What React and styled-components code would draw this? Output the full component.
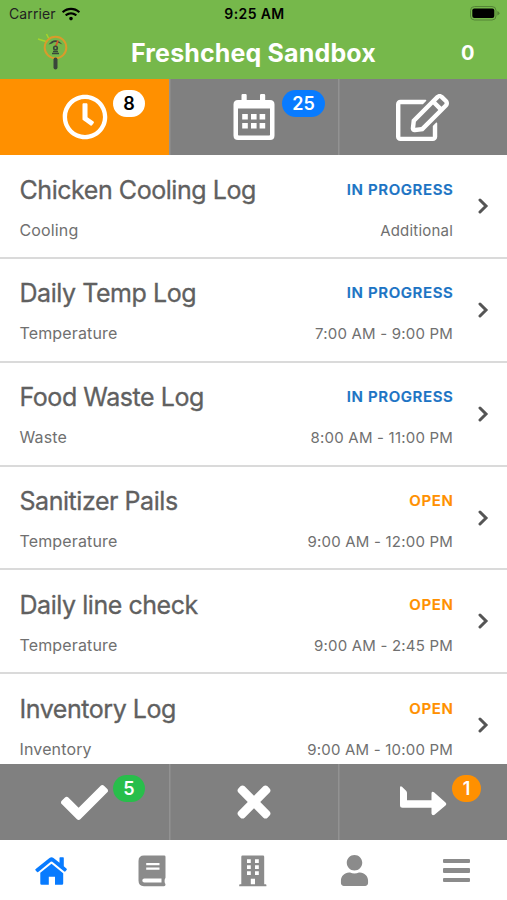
import React from 'react'
import styled, { createGlobalStyle } from 'styled-components';
import { FaRegClock, FaRegEdit, FaCheck, FaTimes, FaUser, FaWifi } from 'react-icons/fa';

const logs = [
    { name: "Chicken Cooling Log", type: "Cooling", status: "IN PROGRESS", time: "Additional" },
    { name: "Daily Temp Log", type: "Temperature", status: "IN PROGRESS", time: "7:00 AM - 9:00 PM" },
    { name: "Food Waste Log", type: "Waste", status: "IN PROGRESS", time: "8:00 AM - 11:00 PM" },
    { name: "Sanitizer Pails", type: "Temperature", status: "OPEN", time: "9:00 AM - 12:00 PM" },
    { name: "Daily line check", type: "Temperature", status: "OPEN", time: "9:00 AM - 2:45 PM" },
    { name: "Inventory Log", type: "Inventory", status: "OPEN", time: "9:00 AM - 10:00 PM" },
];

function Logo() {
    return (
        <svg width="32" height="40" viewBox="0 0 32 40" fill="none">
            <path d="M1 6 L9 8.5 M9.5 1 L12 6" stroke="#a4d52c" strokeWidth="1.5" />
            <circle cx="18.5" cy="14.5" r="10.8" stroke="#d99b2b" strokeWidth="2" />
            <path d="M11.5 11.5 Q18 3 25.5 11.5 L22 10 Q18 8 15 10.5 Z" fill="#39473a" />
            <path d="M18.5 14 L21 7.5" stroke="#d25b2d" strokeWidth="1.8" />
            <circle cx="18.5" cy="15" r="1.8" stroke="#39473a" strokeWidth="1.6" />
            <path d="M16 18.5 H21 M15 20.5 H22" stroke="#39473a" strokeWidth="1.5" />
            <path d="M18.5 26.5 V34.5" stroke="#39473a" strokeWidth="4" strokeLinecap="round" />
        </svg>
    )
}

function BatteryIcon() {
    return (
        <svg width="30" height="15" viewBox="0 0 30 15">
            <rect x="0.5" y="0.5" width="25.5" height="13.5" rx="4" fill="none" stroke="#548436" />
            <rect x="2.3" y="2.5" width="22" height="9.5" rx="2" fill="#000" />
            <path d="M27.3 5 Q29.5 6 29.5 7.2 Q29.5 8.5 27.3 9.5 Z" fill="#548436" />
        </svg>
    )
}

function CalendarIcon() {
    return (
        <svg width="42" height="46" viewBox="0 0 42 46" fill="#fff">
            <path fillRule="evenodd" d="M8.5 1.2 Q8.5 0 9.7 0 H12.5 Q13.7 0 13.7 1.2 V6 H27 V1.2 Q27 0 28.2 0 H31 Q32.2 0 32.2 1.2 V6 H37 Q41.5 6 41.5 10.5 V41.5 Q41.5 46 37 46 H5 Q0.5 46 0.5 41.5 V10.5 Q0.5 6 5 6 H8.5 Z M5 14.5 V40.7 Q5 41.5 5.8 41.5 H36.2 Q37 41.5 37 40.7 V14.5 Z" />
            <path d="M9.2 20h5.6v5.6h-5.6zM18 20h5.6v5.6h-5.6zM26.6 20h5.6v5.6h-5.6zM9.2 29h5.6v5.6h-5.6zM18 29h5.6v5.6h-5.6zM26.6 29h5.6v5.6h-5.6z" />
        </svg>
    )
}

function ForwardIcon() {
    return (
        <svg width="48" height="32" viewBox="0 0 48 32" fill="#fff">
            <path d="M1 1.5 Q1.3 -0.5 3 0.8 L7.3 5 Q8 6 8 7 V14.3 H32.5 V7 Q33 5 35 6.3 L46.5 16.5 Q48 18 46.5 19.5 L35.5 28.8 Q33 30 32.5 27.5 V21.7 H3.5 Q1 21.7 1 19.2 Z" />
        </svg>
    )
}

function HomeIcon() {
    return (
        <svg width="32" height="28" viewBox="0 0 32 28" fill="#087bff">
            <path d="M14.5 1 Q16.5 -0.6 18.5 1 L24.5 5.7 V1 Q24.5 0.3 25.2 0.3 H28.1 Q28.8 0.3 28.8 1 V9.3 L31.4 11.5 Q32.2 12.3 31.6 13 L30.5 14.3 Q29.8 15 29 14.3 L17.3 4.8 Q16.5 4.2 15.7 4.8 L3.2 14.9 Q2.4 15.5 1.8 14.8 L0.5 13.3 Q0 12.6 0.7 12 Z" />
            <path d="M5.3 15.7 L16.5 6.8 L28.2 16.2 V26.5 Q28.2 27.8 26.9 27.8 H20 V19.7 H13.8 V27.8 H6.6 Q5.3 27.8 5.3 26.5 Z" />
        </svg>
    )
}

function BookIcon() {
    return (
        <svg width="28" height="32" viewBox="0 0 28 32">
            <path fill="#8b8b8b" fillRule="evenodd" d="M6 0.5 H26.2 Q27.5 0.5 27.5 1.8 V22.5 Q27.5 23.3 26.8 24 Q26.3 26 26.8 28 Q27.5 28.5 27.5 29.5 Q27.5 31.2 26 31.2 H6 Q0.5 31.2 0.5 25.5 V6 Q0.5 0.5 6 0.5 Z M8.2 8 V10.2 H21.5 V8 Z M8.2 12.5 V14.7 H21.5 V12.5 Z M6.3 23.4 Q4.3 23.4 4.3 25.4 Q4.3 27.4 6.3 27.4 H23.5 V23.4 Z" />
        </svg>
    )
}

function BuildingIcon() {
    return (
        <svg width="28" height="32" viewBox="0 0 28 32">
            <path fill="#8b8b8b" d="M3.5 0.5 H24 Q25.2 0.5 25.2 1.7 V29.3 H26.6 Q27.4 29.3 27.4 30 V31.3 H0.2 V30 Q0.2 29.3 1 29.3 H2.3 V1.7 Q2.3 0.5 3.5 0.5 Z" />
            <path fill="#fff" d="M8 4.2h3.8v3.8h-3.8zM16 4.2h3.8v3.8h-3.8zM8 10.2h3.8v3.8h-3.8zM16 10.2h3.8v3.8h-3.8zM8 16.2h3.8v3.8h-3.8zM16 16.2h3.8v3.8h-3.8zM11.8 23.7h4.2v5.6h-4.2z" />
        </svg>
    )
}

function App() {
    return (
        <Screen>
            <GlobalStyle />
            <Header>
                <StatusBar>
                    <Carrier>Carrier <FaWifi size={18} /></Carrier>
                    <Clock>9:25 AM</Clock>
                    <BatteryIcon />
                </StatusBar>
                <TitleBar>
                    <Logo />
                    <h1>Freshcheq Sandbox</h1>
                    <Count>0</Count>
                </TitleBar>
            </Header>

            <Tabs>
                <Tab $active>
                    <FaRegClock size={46} />
                    <Badge $left={113} $width={32} $bg="#fff" $color="#000">8</Badge>
                </Tab>
                <Tab>
                    <CalendarIcon />
                    <Badge $left={113} $width={43} $bg="#087bff">25</Badge>
                </Tab>
                <Tab>
                    <FaRegEdit size={53} />
                </Tab>
            </Tabs>

            <List>
                {logs.map(log => (
                    <Row key={log.name}>
                        <Info>
                            <h2>{log.name}</h2>
                            <p>{log.type}</p>
                        </Info>
                        <Meta>
                            <Status $open={log.status === "OPEN"}>{log.status}</Status>
                            <p>{log.time}</p>
                        </Meta>
                        <svg width="11" height="16" viewBox="0 0 11 16" fill="none">
                            <path d="M2 2 L8 8 L2 14" stroke="#555" strokeWidth="3" strokeLinecap="round" />
                        </svg>
                    </Row>
                ))}
            </List>

            <Tabs>
                <Tab>
                    <FaCheck size={47} />
                    <Badge $left={113} $width={32} $bg="#28be4b">5</Badge>
                </Tab>
                <Tab>
                    <FaTimes size={48} />
                </Tab>
                <Tab>
                    <ForwardIcon />
                    <Badge $left={114} $width={29} $bg="#ff9000">1</Badge>
                </Tab>
            </Tabs>

            <BottomNav>
                <NavItem><HomeIcon /></NavItem>
                <NavItem><BookIcon /></NavItem>
                <NavItem><BuildingIcon /></NavItem>
                <NavItem><FaUser size={31} /></NavItem>
                <NavItem><MenuLines><i /><i /><i /></MenuLines></NavItem>
            </BottomNav>
        </Screen>
    )
}

export default App

const GlobalStyle = createGlobalStyle`
    * {
        box-sizing: border-box;
    }

    body {
        margin: 0;
        font-family: Inter, "Liberation Sans", sans-serif;
    }

    h1, h2, p {
        margin: 0;
    }

    svg {
        display: block;
        flex: none;
    }
`

const Screen = styled.div`
    width: 507px;
    height: 900px;
    display: flex;
    flex-direction: column;
    overflow: hidden;
    background-color: #fff;
`

const Header = styled.header`
    height: 79px;
    background-color: #76b84b;
`

const StatusBar = styled.div`
    height: 27px;
    padding: 0 7px 0 9px;
    display: grid;
    grid-template-columns: 1fr auto 1fr;
    align-items: center;
    font-size: 14px;

    & > svg {
        justify-self: end;
    }
`

const Carrier = styled.div`
    display: flex;
    align-items: center;
    gap: 6px;
    color: #222;
    letter-spacing: 0.1px;

    svg {
        color: #000;
    }
`

const Clock = styled.div`
    font-weight: 600;
    letter-spacing: 0.4px;
`

const TitleBar = styled.div`
    height: 52px;
    display: grid;
    grid-template-columns: 131px 1fr 131px;
    align-items: center;
    color: #fff;

    svg {
        margin-left: 37px;
    }

    h1 {
        font-size: 25px;
        line-height: 30px;
        margin-top: -1px;
        letter-spacing: 0.15px;
        text-align: center;
        white-space: nowrap;
    }
`

const Count = styled.div`
    padding-left: 85px;
    font-size: 20px;
    font-weight: 700;
`

const Tabs = styled.div`
    height: 76px;
    flex: none;
    display: grid;
    grid-template-columns: repeat(3, 1fr);
`

const Tab = styled.div`
    position: relative;
    display: flex;
    align-items: center;
    justify-content: center;
    color: #fff;
    background-color: ${props => props.$active ? '#ff9000' : '#808080'};

    & + & {
        box-shadow: inset 1.5px 0 0 #929292;
    }
`

const Badge = styled.span`
    position: absolute;
    top: 11px;
    left: ${props => props.$left}px;
    width: ${props => props.$width}px;
    height: 27px;
    border-radius: 14px;
    line-height: 28px;
    text-align: center;
    font-size: 18px;
    font-weight: 600;
    color: ${props => props.$color || '#fff'};
    background-color: ${props => props.$bg};
`

const List = styled.main`
    height: 609px;
    overflow: hidden;
`

const Row = styled.div`
    height: 103.85px;
    padding: 0 18px 0 19.5px;
    display: flex;
    border-bottom: 2px solid #dadada;

    & > svg {
        margin-top: 43px;
    }
`

const Info = styled.div`
    flex: 1;
    padding-top: 18.6px;
    color: #606060;

    h2 {
        font-size: 25px;
        line-height: 32px;
        font-weight: 400;
        letter-spacing: -0.45px;
        -webkit-text-stroke: 0.3px #606060;
        white-space: nowrap;
    }

    p {
        margin-top: 14px;
        font-size: 16px;
        line-height: 20px;
        letter-spacing: 0.15px;
        color: #707070;
    }
`

const Meta = styled.div`
    width: 160px;
    margin-right: 25px;
    padding-top: 24.6px;
    text-align: right;
    white-space: nowrap;

    p {
        margin-top: 21px;
        font-size: 15px;
        line-height: 20px;
        letter-spacing: 0.2px;
        color: #707070;
    }
`

const Status = styled.div`
    font-size: 15px;
    line-height: 20px;
    font-weight: 600;
    letter-spacing: 0.6px;
    margin-right: -0.4px;
    -webkit-text-stroke: 0.2px currentColor;
    color: ${props => props.$open ? '#ff9000' : '#1c74c4'};
`

const BottomNav = styled.nav`
    height: 60px;
    padding-top: 1px;
    display: grid;
    grid-template-columns: repeat(5, 1fr);
`

const NavItem = styled.div`
    display: flex;
    align-items: center;
    justify-content: center;
    color: #8b8b8b;
`

const MenuLines = styled.div`
    width: 27px;
    display: flex;
    flex-direction: column;
    gap: 5px;

    i {
        height: 4.6px;
        border-radius: 1px;
        background-color: #8b8b8b;
    }
`
